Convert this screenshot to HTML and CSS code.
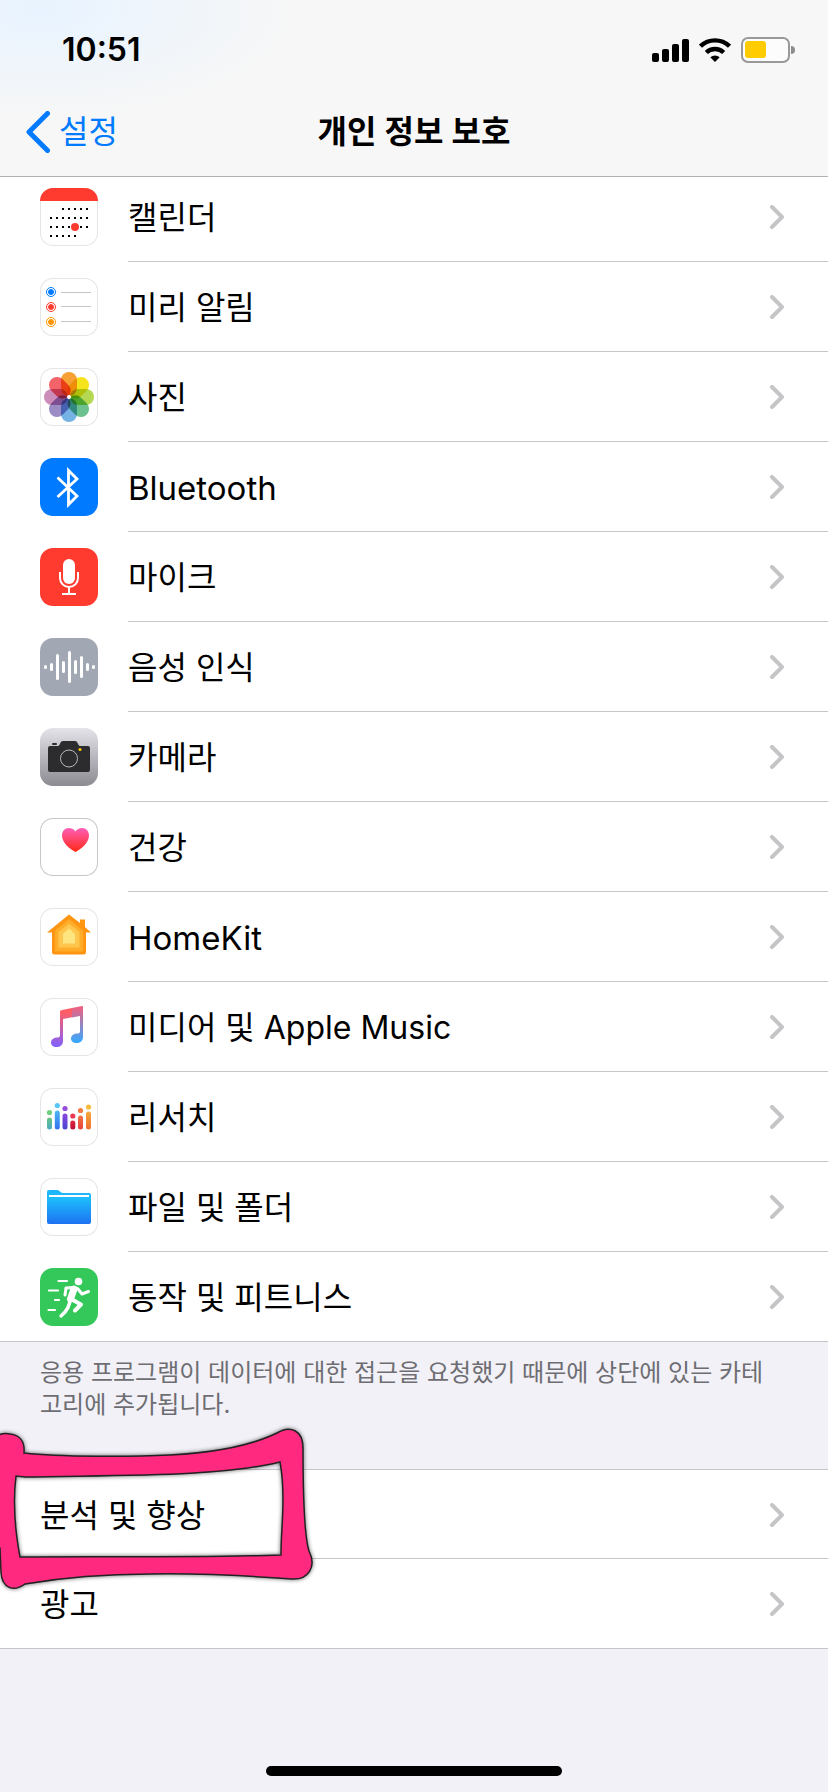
FILE: index.html
```html
<!DOCTYPE html>
<html lang="ko">
<head>
    <meta charset="UTF-8">
    <meta name="viewport" content="width=device-width, initial-scale=1.0">
    <title>개인 정보 보호</title>
    <link rel="stylesheet" href="styles.css">
</head>
<body>

<header class="header">
    <div class="status-bar">
        <span class="time">10:51</span>
        <div class="status-icons">
            <svg width="37" height="23" viewBox="0 0 37 23">
                <rect x="0" y="14" width="7" height="9" rx="2"/>
                <rect x="10" y="10" width="7" height="13" rx="2"/>
                <rect x="20" y="5" width="7" height="18" rx="2"/>
                <rect x="30" y="0" width="7" height="23" rx="2"/>
            </svg>
            <svg width="32" height="24" viewBox="0 0 32 24">
                <path d="M1.500 8.200a21 21 0 0 1 29 0" fill="none" stroke="#000" stroke-width="4.400"/>
                <path d="M7.300 14.500a12.700 12.700 0 0 1 17.400 0" fill="none" stroke="#000" stroke-width="4.400"/>
                <path d="M11.300 19.200a7 7 0 0 1 9.400 0L16 24z"/>
            </svg>
            <svg width="54" height="26" viewBox="0 0 54 26">
                <rect x="1" y="1" width="47" height="24" rx="6" fill="#fff" fill-opacity=".6" stroke="#999" stroke-width="2"/>
                <rect x="4" y="4" width="21" height="17" rx="3" fill="#fc0"/>
                <path d="M50 9a4 4 0 0 1 0 8z" fill="#8c8c8c"/>
            </svg>
        </div>
    </div>
    <nav class="nav-bar">
        <a class="back" href="#">
            <svg width="24" height="42" viewBox="0 0 24 42"><path d="M21.500 2.500L3 21l18.500 18.500" fill="none" stroke="#007aff" stroke-width="5" stroke-linecap="round" stroke-linejoin="round"/></svg>
            설정
        </a>
        <h1 class="title">개인 정보 보호</h1>
    </nav>
</header>

<main>
    <div class="list apps">
        <a class="row" href="#">
            <!-- calendar -->
            <svg class="icon outlined" viewBox="0 0 58 58">
                <path d="M0 13h58V0H0z" fill="#ff3b30"/>
                <path d="M22 21h26M10 30h38M10 39h38M10 48h26" stroke="#000" stroke-width="2" stroke-dasharray="2 4"/>
                <circle cx="35" cy="39" r="4" fill="#ff3b30"/>
            </svg>
            <span class="label">캘린더</span>
            <svg class="chevron" viewBox="0 0 14 24"><path d="M2 2l10 10L2 22"/></svg>
        </a>
        <a class="row" href="#">
            <!-- reminders -->
            <svg class="icon outlined" viewBox="0 0 58 58">
                <g fill="#007aff" stroke="#007aff"><circle cx="11" cy="14" r="4.500" fill="none"/><circle cx="11" cy="14" r="2.500"/></g>
                <g fill="#ff3b30" stroke="#ff3b30"><circle cx="11" cy="29" r="4.500" fill="none"/><circle cx="11" cy="29" r="2.500"/></g>
                <g fill="#ff9500" stroke="#ff9500"><circle cx="11" cy="44" r="4.500" fill="none"/><circle cx="11" cy="44" r="2.500"/></g>
                <path d="M21 14.500h30M21 28.500h30M21 43.500h30" stroke="#c4c4c9"/>
            </svg>
            <span class="label">미리 알림</span>
            <svg class="chevron" viewBox="0 0 14 24"><path d="M2 2l10 10L2 22"/></svg>
        </a>
        <a class="row" href="#">
            <!-- photos -->
            <svg class="icon outlined photos" viewBox="-29 -29 58 58">
                <rect x="-8" y="-25" width="16" height="24" rx="8" fill="#f7a035"/>
                <rect x="-8" y="-25" width="16" height="24" rx="8" fill="#f5e31b" transform="rotate(45)"/>
                <rect x="-8" y="-25" width="16" height="24" rx="8" fill="#b5d853" transform="rotate(90)"/>
                <rect x="-8" y="-25" width="16" height="24" rx="8" fill="#6cc28e" transform="rotate(135)"/>
                <rect x="-8" y="-25" width="16" height="24" rx="8" fill="#74b3e3" transform="rotate(180)"/>
                <rect x="-8" y="-25" width="16" height="24" rx="8" fill="#9b8cc6" transform="rotate(225)"/>
                <rect x="-8" y="-25" width="16" height="24" rx="8" fill="#cd8dba" transform="rotate(270)"/>
                <rect x="-8" y="-25" width="16" height="24" rx="8" fill="#f2646a" transform="rotate(315)"/>
                <circle r="2" fill="#fff"/>
            </svg>
            <span class="label">사진</span>
            <svg class="chevron" viewBox="0 0 14 24"><path d="M2 2l10 10L2 22"/></svg>
        </a>
        <a class="row" href="#">
            <!-- bluetooth -->
            <svg class="icon blue" viewBox="0 0 58 58">
                <path d="M17.500 19.500L37 38 28.500 46.500V12.500L37 21 17.500 39" fill="none" stroke="#fff" stroke-width="2.800"/>
            </svg>
            <span class="label latin">Bluetooth</span>
            <svg class="chevron" viewBox="0 0 14 24"><path d="M2 2l10 10L2 22"/></svg>
        </a>
        <a class="row" href="#">
            <!-- microphone -->
            <svg class="icon red" viewBox="0 0 58 58">
                <rect x="23" y="11" width="12" height="25" rx="6" fill="#fff"/>
                <path d="M20 24v6a9 9 0 0 0 18 0v-6M29 39v7M22 46h14" fill="none" stroke="#fff" stroke-width="2"/>
            </svg>
            <span class="label">마이크</span>
            <svg class="chevron" viewBox="0 0 14 24"><path d="M2 2l10 10L2 22"/></svg>
        </a>
        <a class="row" href="#">
            <!-- speech recognition -->
            <svg class="icon gray" viewBox="0 0 58 58">
                <path d="M5.500 28.500v1M11.500 26.500v5M17.500 17.500v23M23.500 24.500v9M29.500 14.500v29M35.500 23.500v11M41.500 19.500v19M47.500 26.500v5M53.500 28.500v1" stroke="#fff" stroke-width="3" stroke-linecap="round"/>
            </svg>
            <span class="label">음성 인식</span>
            <svg class="chevron" viewBox="0 0 14 24"><path d="M2 2l10 10L2 22"/></svg>
        </a>
        <a class="row" href="#">
            <!-- camera -->
            <svg class="icon silver" viewBox="0 0 58 58">
                <path d="M10 18h8c2 0 2-5 5-5h12c3 0 3 5 5 5h8a2 2 0 0 1 2 2v22a2 2 0 0 1-2 2H10a2 2 0 0 1-2-2V20a2 2 0 0 1 2-2z" fill="#2c2c2e"/>
                <rect x="12" y="15" width="5" height="2" rx="1" fill="#2c2c2e"/>
                <circle cx="29" cy="30.500" r="8.500" fill="none" stroke="#b9b9bb"/>
                <circle cx="40" cy="21.500" r="1.500" fill="#fc0"/>
            </svg>
            <span class="label">카메라</span>
            <svg class="chevron" viewBox="0 0 14 24"><path d="M2 2l10 10L2 22"/></svg>
        </a>
        <a class="row" href="#">
            <!-- health -->
            <svg class="icon outlined dark" viewBox="0 0 58 58">
                <defs><linearGradient id="heart" x2="0" y2="1"><stop stop-color="#ff5fb8"/><stop offset="1" stop-color="#ff2815"/></linearGradient></defs>
                <path d="M35.500 34C30 31 22 25 22 17.500c0-4.500 3-7.500 6.800-7.500 3 0 5.300 1.300 6.700 3.500C36.900 11.300 39.200 10 42.200 10c3.800 0 6.800 3 6.800 7.500C49 25 41 31 35.500 34z" fill="url(#heart)"/>
            </svg>
            <span class="label">건강</span>
            <svg class="chevron" viewBox="0 0 14 24"><path d="M2 2l10 10L2 22"/></svg>
        </a>
        <a class="row" href="#">
            <!-- home -->
            <svg class="icon outlined" viewBox="0 0 58 58">
                <path d="M29 6.500l11 8.500v-3.500h5V19l6 5.500h-5V44a2.500 2.500 0 0 1-2.500 2.500h-29A2.500 2.500 0 0 1 12 44V24.500H7z" fill="#ff9510"/>
                <path d="M29 11l14 11.500v21H15v-21z" fill="#ffac28"/>
                <path d="M29 15.500l10.500 8.500v15.500h-21V24z" fill="#ffc64d"/>
                <path d="M29 20.500l6 5.500v9.500H23V26z" fill="#ffe580"/>
            </svg>
            <span class="label latin">HomeKit</span>
            <svg class="chevron" viewBox="0 0 14 24"><path d="M2 2l10 10L2 22"/></svg>
        </a>
        <a class="row" href="#">
            <!-- music -->
            <svg class="icon outlined" viewBox="0 0 58 58">
                <defs>
                    <linearGradient id="note-left" gradientUnits="userSpaceOnUse" x1="20" y1="14" x2="17" y2="49"><stop stop-color="#ff5e66"/><stop offset="1" stop-color="#8060ff"/></linearGradient>
                    <linearGradient id="note-right" gradientUnits="userSpaceOnUse" x1="40" y1="9" x2="38" y2="44"><stop stop-color="#f06080"/><stop offset="1" stop-color="#38a8ff"/></linearGradient>
                </defs>
                <path d="M20 13.500q0-1 1-1.200L32 10v9.200L23 21v22c0 4-3 6-6.500 6S11 47 11 44.500s2.500-5 6-5c2 0 3-.5 3-2.500z" fill="url(#note-left)"/>
                <path d="M32 10l10-2q1-.2 1 1v30c0 4-3 6-6.500 6S31 43 31 40.500s2.500-5 6-5c2 0 3-.5 3-2.500V18l-8 1.500z" fill="url(#note-right)"/>
            </svg>
            <span class="label">미디어 및 Apple Music</span>
            <svg class="chevron" viewBox="0 0 14 24"><path d="M2 2l10 10L2 22"/></svg>
        </a>
        <a class="row" href="#">
            <!-- research -->
            <svg class="icon outlined" viewBox="0 0 58 58">
                <defs>
                    <linearGradient id="bar1" x2="0" y2="1"><stop stop-color="#68c781"/><stop offset="1" stop-color="#4aa9c4"/></linearGradient>
                    <linearGradient id="bar2" x2="0" y2="1"><stop stop-color="#4fb8f4"/><stop offset="1" stop-color="#2f71ef"/></linearGradient>
                    <linearGradient id="bar3" x2="0" y2="1"><stop stop-color="#8a48dc"/><stop offset="1" stop-color="#4844d2"/></linearGradient>
                    <linearGradient id="bar4" x2="0" y2="1"><stop stop-color="#e0283c"/><stop offset="1" stop-color="#b90d38"/></linearGradient>
                    <linearGradient id="bar5" x2="0" y2="1"><stop stop-color="#ef7540"/><stop offset="1" stop-color="#e8413f"/></linearGradient>
                    <linearGradient id="bar6" x2="0" y2="1"><stop stop-color="#f5a83b"/><stop offset="1" stop-color="#ed7030"/></linearGradient>
                </defs>
                <circle cx="9.500" cy="24.500" r="2.600" fill="#70cf80"/><rect x="7" y="29.500" width="5" height="12" rx="2.500" fill="url(#bar1)"/>
                <circle cx="17.300" cy="17.500" r="2.600" fill="#59c8f6"/><rect x="14.800" y="22.500" width="5" height="19" rx="2.500" fill="url(#bar2)"/>
                <circle cx="25" cy="20.500" r="2.600" fill="#964ddd"/><rect x="22.500" y="25.500" width="5" height="16" rx="2.500" fill="url(#bar3)"/>
                <circle cx="32.800" cy="28" r="2.600" fill="#ea3a51"/><rect x="30.300" y="32.500" width="5" height="9" rx="2.500" fill="url(#bar4)"/>
                <circle cx="40.500" cy="22.500" r="2.600" fill="#f07d40"/><rect x="38" y="27.500" width="5" height="14" rx="2.500" fill="url(#bar5)"/>
                <circle cx="48.500" cy="19" r="2.600" fill="#f6bd3f"/><rect x="46" y="23.500" width="5" height="18" rx="2.500" fill="url(#bar6)"/>
            </svg>
            <span class="label">리서치</span>
            <svg class="chevron" viewBox="0 0 14 24"><path d="M2 2l10 10L2 22"/></svg>
        </a>
        <a class="row" href="#">
            <!-- files -->
            <svg class="icon outlined" viewBox="0 0 58 58">
                <defs><linearGradient id="folder" x2="0" y2="1"><stop stop-color="#1db5fb"/><stop offset=".25" stop-color="#1dbcfb"/><stop offset="1" stop-color="#1e72f2"/></linearGradient></defs>
                <path d="M9 12h8c3 0 3 3 6 3h26a2 2 0 0 1 2 2v27a2 2 0 0 1-2 2H9a2 2 0 0 1-2-2V14a2 2 0 0 1 2-2z" fill="url(#folder)"/>
                <rect x="9" y="17" width="40" height="2" fill="#fff"/>
            </svg>
            <span class="label">파일 및 폴더</span>
            <svg class="chevron" viewBox="0 0 14 24"><path d="M2 2l10 10L2 22"/></svg>
        </a>
        <a class="row" href="#">
            <!-- motion and fitness -->
            <svg class="icon green" viewBox="0 0 58 58">
                <circle cx="38.500" cy="13.500" r="3.800" fill="#fff"/>
                <g fill="none" stroke="#fff" stroke-linecap="round" stroke-linejoin="round">
                    <path d="M18.500 13H27M9 22.500h9M15 32h4M8.500 42H15" stroke-width="2.200"/>
                    <path d="M25 27l1-7 8-.5 4 1.500 4 5 6.500-2.500" stroke-width="3"/>
                    <path d="M34 21l-3.500 10" stroke-width="7"/>
                    <path d="M30 31c0 7-3 12-9 17" stroke-width="3.500"/>
                    <path d="M31 31l10 5.500-6 6" stroke-width="4"/>
                </g>
            </svg>
            <span class="label">동작 및 피트니스</span>
            <svg class="chevron" viewBox="0 0 14 24"><path d="M2 2l10 10L2 22"/></svg>
        </a>
    </div>

    <p class="note">응용 프로그램이 데이터에 대한 접근을 요청했기 때문에 상단에 있는 카테고리에 추가됩니다.</p>

    <div class="list more">
        <a class="row" href="#">
            <span class="label">분석 및 향상</span>
            <svg class="chevron" viewBox="0 0 14 24"><path d="M2 2l10 10L2 22"/></svg>
        </a>
        <a class="row" href="#">
            <span class="label">광고</span>
            <svg class="chevron" viewBox="0 0 14 24"><path d="M2 2l10 10L2 22"/></svg>
        </a>
        <!-- hand-drawn marker frame -->
        <svg class="marker" width="330" height="200" viewBox="0 0 330 200">
            <path fill-rule="evenodd" d="M-8 38C0 33 5 33 10 34C20 35 25 42 24 53C60 57 130 57 170 55C210 53 250 46 277 33C290 25 303 30 303 48C303 100 304 135 309 151C317 167 308 180 292 179C250 176 200 173 150 174C105 174 60 178 25 184C14 192 2 189 1 172L0 148L-8 140ZM16 76C13 100 14 125 20 157C100 156 200 158 281 155C281 135 283 120 283 100C283 85 282 72 280 62C220 77 120 75 25 77Z"/>
        </svg>
    </div>
</main>

<div class="home-indicator"></div>

</body>
</html>
```
FILE: styles.css
```css
* {
    box-sizing: border-box;
}
body {
    display: flex;
    flex-direction: column;
    min-height: 100vh;
    margin: 0;
    overflow-x: hidden;
    background: #f2f1f7;
    font-family: Inter, "Noto Sans CJK KR", sans-serif;
    font-size: 32px;
    line-height: 40px;
    color: #000;
}
a {
    color: inherit;
    text-decoration: none;
}
svg {
    display: block;
    flex: none;
}

/* top */
.header {
    position: relative;
    z-index: 1;
    background: radial-gradient(ellipse 260px 110px at 40px 10px, #e8f3ff, rgba(232, 243, 255, 0)), #f7f7f7;
    border-bottom: 1px solid #b2b2b4;
}
.status-bar {
    display: flex;
    align-items: center;
    justify-content: space-between;
    height: 88px;
    padding: 12px 33px 0 62px;
}
.time {
    font-weight: 600;
}
.status-icons {
    display: flex;
    align-items: center;
    gap: 10px;
}
.nav-bar {
    display: grid;
    grid-template-columns: 1fr auto 1fr;
    align-items: center;
    height: 88px;
    padding: 0 26px;
}
.back {
    display: flex;
    align-items: center;
    gap: 9px;
    color: #007aff;
}
.title {
    margin: 0;
    font-size: 32px;
    font-weight: 600;
}

/* lists */
.list {
    background: #fff;
    border-bottom: 1px solid #c6c6c8;
}
.apps {
    margin-top: -5px;
}
.row {
    display: flex;
    align-items: center;
    height: 90px;
    padding-left: 40px;
}
.row:last-of-type {
    height: 89px;
}
.label {
    flex: 1;
    padding-top: 2px;
}
.latin {
    font-size: 33px;
}
.icon {
    width: 58px;
    height: 58px;
    margin-right: 30px;
    border-radius: 13px;
}
.apps .row {
    background: linear-gradient(#c6c6c8, #c6c6c8) 128px 100% / 100% 1px no-repeat;
}
.apps .row:last-of-type {
    background: none;
}
.chevron {
    width: 14px;
    height: 24px;
    margin-right: 44px;
    fill: none;
    stroke: #c5c5c7;
    stroke-width: 4;
    stroke-linecap: round;
    stroke-linejoin: round;
}

/* icon tiles */
.outlined {
    background: #fff;
    box-shadow: inset 0 0 0 1px #e5e5e5;
}
.dark {
    box-shadow: inset 0 0 0 1px #c7c7c7;
}
.photos {
    isolation: isolate;
}
.photos rect {
    mix-blend-mode: multiply;
}
.blue {
    background: #007aff;
}
.red {
    background: #ff3b30;
}
.gray {
    background: #a2a8b3;
}
.silver {
    background: linear-gradient(#e4e3e9, #8c8b91);
}
.green {
    background: #34c759;
}

.note {
    margin: 0;
    padding: 15px 48px 48px 40px;
    font-size: 24px;
    line-height: 32px;
    color: #6d6d72;
}

.more {
    position: relative;
    border-top: 1px solid #c6c6c8;
}
.more .row:first-child {
    height: 89px;
    background: linear-gradient(#c6c6c8, #c6c6c8) 40px 100% / 100% 1px no-repeat;
}
.marker {
    position: absolute;
    left: 0;
    top: -70px;
    pointer-events: none;
    fill: #ff2980;
    stroke: #222;
    stroke-width: 1.5;
    filter: drop-shadow(0 0 2px rgba(0, 0, 0, 0.6));
}

.home-indicator {
    width: 296px;
    height: 10px;
    margin: auto auto 16px;
    border-radius: 5px;
    background: #000;
}
```
